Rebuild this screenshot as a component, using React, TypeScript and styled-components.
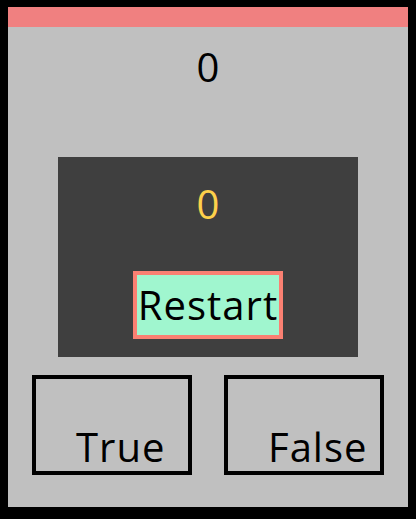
import React, { useState } from 'react';
import styled, { createGlobalStyle } from 'styled-components';

const GlobalStyle = createGlobalStyle`
  html, body {
    margin: 0;
    background: #000;
  }

  body {
    padding: 7px 8px 12px;
    font-family: 'Open Sans', 'Liberation Sans', sans-serif;
  }
`;

const App: React.FC = () => {
  const [score, setScore] = useState(0);
  const [streak, setStreak] = useState(0);

  const answer = () => {
    setScore(score);
    setStreak(streak);
  };

  const restart = () => {
    setScore(0);
    setStreak(0);
  };

  return (
    <>
      <GlobalStyle />
      <Container>
        <TopBar />
        <Score>{score}</Score>
        <Panel>
          <Streak>{streak}</Streak>
          <RestartButton onClick={restart}>Restart</RestartButton>
        </Panel>
        <Answers>
          <AnswerButton onClick={answer}>True</AnswerButton>
          <AnswerButton onClick={answer}>False</AnswerButton>
        </Answers>
      </Container>
    </>
  );
};

export default App;

const Container = styled.div`
  display: flex;
  flex-direction: column;
  align-items: center;

  width: 400px;
  height: 500px;

  background: #c0c0c0;
`;

const TopBar = styled.div`
  align-self: stretch;
  height: 20px;

  background: #f08080;
`;

const Score = styled.div`
  margin-top: 20px;

  font-size: 40px;
  line-height: 40px;
  color: #000;
`;

const Panel = styled.div`
  display: flex;
  flex-direction: column;
  align-items: center;

  width: 300px;
  height: 200px;
  margin-top: 70px;
  padding-top: 27px;
  box-sizing: border-box;

  background: #3f3f3f;
`;

const Streak = styled.div`
  font-size: 40px;
  line-height: 40px;
  color: #fdd04b;
`;

const RestartButton = styled.button`
  display: flex;
  align-items: center;
  justify-content: center;

  width: 150px;
  height: 68px;
  margin-top: 47px;
  padding: 0;

  border: 4px solid #fa8072;
  background: #a0f6cf;

  font-family: inherit;
  font-size: 40px;
  line-height: 60px;
  letter-spacing: 1px;
  color: #000;
  cursor: pointer;
`;

const Answers = styled.div`
  display: flex;
  gap: 32px;

  margin-top: 18px;
`;

const AnswerButton = styled.button`
  display: flex;
  align-items: flex-end;

  width: 160px;
  height: 100px;
  padding: 0 0 4px 40px;
  box-sizing: border-box;

  border: 4px solid #000;
  background: transparent;

  font-family: inherit;
  font-size: 40px;
  line-height: 40px;
  letter-spacing: 1px;
  color: #000;
  cursor: pointer;
`;
